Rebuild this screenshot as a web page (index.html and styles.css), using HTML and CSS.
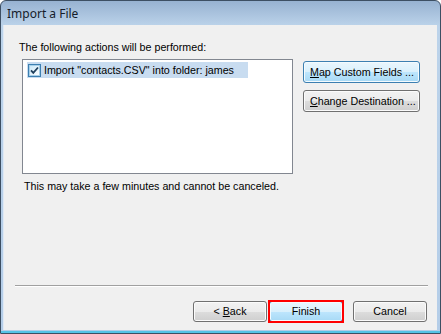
FILE: index.html
```html
<!DOCTYPE html>
<html>
<head>
<meta charset="utf-8">
<link rel="stylesheet" href="styles.css">
</head>
<body>
<div class="window">
  <div class="titlebar"><span class="title">Import a File</span></div>
  <div class="frame">
    <div class="content">
      <div class="label">The following actions will be performed:</div>
      <div class="main">
        <div class="listbox">
          <div class="item">
            <svg class="check" width="13" height="13" viewBox="0 0 13 13">
              <defs>
                <linearGradient id="cb" x1="0" y1="0" x2="1" y2="1">
                  <stop offset="0" stop-color="#c9e7f8"/>
                  <stop offset="1" stop-color="#ffffff"/>
                </linearGradient>
              </defs>
              <rect x="0.5" y="0.5" width="12" height="12" fill="#fff" stroke="#3c7fb1"/>
              <rect x="1.5" y="1.5" width="10" height="10" fill="url(#cb)" stroke="#a7cfe8"/>
              <path d="M3 6.3 L5.3 8.8 L10 3.5" fill="none" stroke="#21415e" stroke-width="1.8"/>
            </svg>
            <span>Import "contacts.CSV" into folder: james</span>
          </div>
        </div>
        <div class="side">
          <button class="btn wide hot"><u>M</u>ap Custom Fields ...</button>
          <button class="btn wide"><u>C</u>hange Destination ...</button>
        </div>
      </div>
      <div class="note">This may take a few minutes and cannot be canceled.</div>
      <div class="spacer"></div>
      <div class="separator"></div>
      <div class="footer">
        <button class="btn">&lt; <u>B</u>ack</button>
        <span class="focus-ring"><button class="btn hot">Finish</button></span>
        <button class="btn cancel">Cancel</button>
      </div>
    </div>
  </div>
</div>
</body>
</html>
```
FILE: styles.css
```css
html, body {
  margin: 0;
  padding: 0;
  background: #ffffff;
}
.window {
  width: 441px;
  height: 334px;
  box-sizing: border-box;
  border: 1px solid #3d4f63;
  border-radius: 6px 6px 0 0;
  background: linear-gradient(#97b2d1, #bcd3ea 25px, #b4cde8);
  display: flex;
  flex-direction: column;
  overflow: hidden;
  font-family: "Liberation Sans", Arial, sans-serif;
  font-size: 10.7px;
  color: #000;
}
.titlebar {
  height: 24px;
  flex: none;
  display: flex;
  align-items: center;
  padding-left: 6px;
}
.title {
  font-family: "Noto Sans", "Open Sans", sans-serif;
  font-size: 12px;
  color: #151c2a;
  padding-top: 1px;
}
.frame {
  flex: 1;
  display: flex;
  padding: 0 3px 3px 2px;
  box-shadow: inset 0 -2px 0 #56c3e6;
}
.content {
  flex: 1;
  background: #f0f0f0;
  display: flex;
  flex-direction: column;
  padding-top: 16px;
  border-left: 1px solid #dfe9f5;
}
.label {
  margin-left: 15px;
  line-height: 13px;
}
.main {
  display: flex;
  gap: 10px;
  margin-top: 5px;
  margin-left: 18px;
}
.listbox {
  box-sizing: border-box;
  width: 271px;
  height: 115px;
  border: 1px solid #828790;
  background: #fff;
  padding: 2px 4px;
}
.item {
  display: flex;
  align-items: center;
  gap: 3px;
  width: 220px;
  height: 16px;
  background: #c8dcf0;
  padding-left: 1px;
  white-space: nowrap;
}
.check {
  flex: none;
}
.side {
  display: flex;
  flex-direction: column;
  gap: 7px;
  padding-top: 2px;
}
.btn {
  height: 21px;
  width: 74px;
  box-sizing: border-box;
  border: 1px solid #707070;
  border-radius: 3px;
  background: linear-gradient(#f2f2f2 0%, #ebebeb 50%, #dddddd 50%, #cfcfcf 100%);
  box-shadow: inset 0 0 0 1px #fbfbfb;
  font-family: "Liberation Sans", Arial, sans-serif;
  font-size: 10.7px;
  color: #000;
  padding: 0;
  margin: 0;
  line-height: 17px;
  white-space: nowrap;
  display: block;
}
.btn.wide {
  width: 117px;
  height: 22px;
  text-align: left;
  padding-left: 6px;
}
.btn.hot {
  border-color: #3c7fb1;
  background: linear-gradient(#eaf6fd 0%, #d9f0fc 50%, #bee6fd 50%, #a7d9f5 100%);
  box-shadow: inset 0 0 0 1px #f4fbfe;
}
.note {
  margin-left: 20px;
  margin-top: 6px;
  line-height: 13px;
}
.spacer {
  flex: 1;
}
.separator {
  height: 1px;
  background: #a0a0a0;
  border-bottom: 1px solid #ffffff;
  margin-left: 11px;
  margin-right: 9px;
}
.footer {
  display: flex;
  justify-content: flex-end;
  margin-top: 14px;
  margin-bottom: 8px;
  margin-right: 10px;
}
.focus-ring {
  position: relative;
  margin-left: 2px;
  display: block;
}
.focus-ring::after {
  content: "";
  position: absolute;
  inset: -1px;
  border: 2px solid #ff0000;
  pointer-events: none;
}
.cancel {
  margin-left: 10px;
}
```
